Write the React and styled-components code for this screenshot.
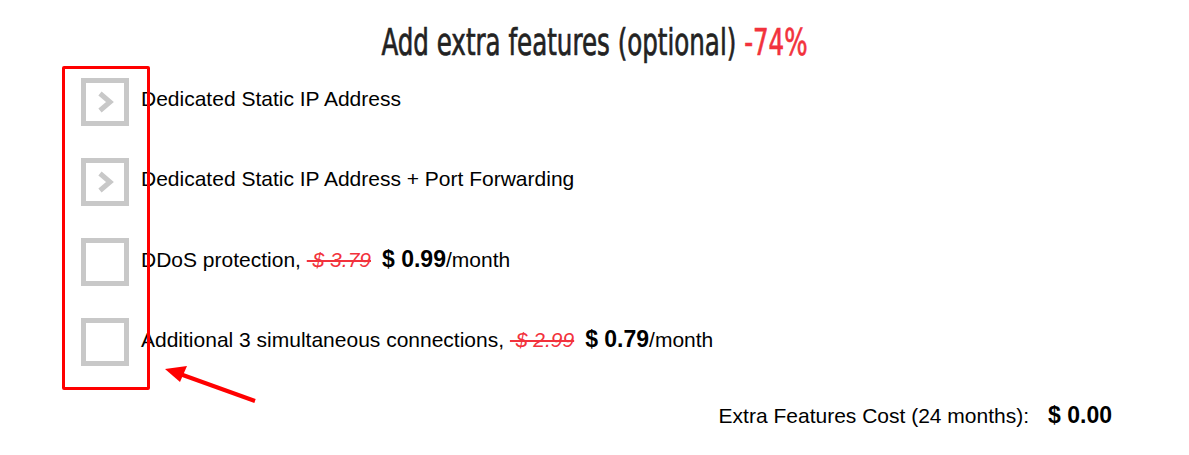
import React from 'react';
import styled, { createGlobalStyle } from 'styled-components';

const GlobalStyle = createGlobalStyle`
  body {
    margin: 0;
    background: #fff;
    font-family: "Liberation Sans", Arial, sans-serif;
  }
`;

const Page = styled.div`
  position: relative;
  width: 1189px;
  height: 455px;
  overflow: hidden;
`;

const Title = styled.h2`
  margin: 0;
  padding-top: 20px;
  text-align: center;
  font-family: "Liberation Sans Narrow", "DejaVu Sans Condensed", sans-serif;
  font-weight: 400;
  font-size: 27.3px;
  line-height: 40px;
  color: #222;
  -webkit-text-stroke: 0.5px currentColor;
  transform: scaleY(1.36);
  transform-origin: 50% 55%;
`;

const Discount = styled.span`
  color: #f2323c;
`;

const List = styled.div`
  display: flex;
  flex-direction: column;
  gap: 32px;
  padding: 18px 0 0 81px;
`;

const Row = styled.label`
  display: flex;
  align-items: center;
  height: 48px;
  font-size: 21px;
  color: #000;
`;

const Box = styled.span`
  flex: none;
  box-sizing: border-box;
  width: 48px;
  height: 48px;
  margin-right: 12px;
  border: 5px solid #c8c8c8;
  display: flex;
  align-items: center;
  justify-content: center;
`;

const Text = styled.span`
  margin-top: -6px;
`;

const OldPrice = styled.s`
  color: #f2323c;
  font-style: italic;
  margin-right: 11px;
`;

const Price = styled.b`
  font-size: 23px;
`;

const Footer = styled.div`
  display: flex;
  justify-content: flex-end;
  align-items: baseline;
  gap: 19px;
  padding: 36px 77px 0 0;
  font-size: 21px;
  color: #000;
`;

const Total = styled.b`
  font-size: 23px;
`;

const Highlight = styled.div`
  position: absolute;
  left: 62px;
  top: 66px;
  width: 82px;
  height: 318px;
  border: 3px solid #ff0000;
  border-radius: 2px;
  pointer-events: none;
`;

const Arrow = styled.svg`
  position: absolute;
  left: 160px;
  top: 362px;
`;

const Chevron = () => (
  <svg width="18" height="22" viewBox="0 0 18 22" style={{ marginLeft: 2 }}>
    <path d="M3 2.5 L13 11 L3 19.5" fill="none" stroke="#c8c8c8" strokeWidth="5" />
  </svg>
);

const features = [
  { name: 'Dedicated Static IP Address', chevron: true },
  { name: 'Dedicated Static IP Address + Port Forwarding', chevron: true },
  { name: 'DDoS protection,', old: '$ 3.79', price: '0.99' },
  { name: 'Additional 3 simultaneous connections,', old: '$ 2.99', price: '0.79' },
];

export default function App() {
  return (
    <Page>
      <GlobalStyle />
      <Title>
        Add extra features (optional) <Discount>-74%</Discount>
      </Title>
      <List>
        {features.map((f) => (
          <Row key={f.name}>
            <Box>{f.chevron && <Chevron />}</Box>
            <Text>
              {f.name}
              {f.price && (
                <>
                  {' '}
                  <OldPrice>{'\u00a0' + f.old}</OldPrice>
                  <Price>$ {f.price}</Price>/month
                </>
              )}
            </Text>
          </Row>
        ))}
      </List>
      <Footer>
        <span>Extra Features Cost (24 months):</span>
        <Total>$ 0.00</Total>
      </Footer>
      <Highlight />
      <Arrow width="100" height="45" viewBox="0 0 100 45">
        <path d="M95 39 L20 12" stroke="#ff0000" strokeWidth="4" />
        <path d="M5 7 L27 4 L20 20 Z" fill="#ff0000" />
      </Arrow>
    </Page>
  );
}
